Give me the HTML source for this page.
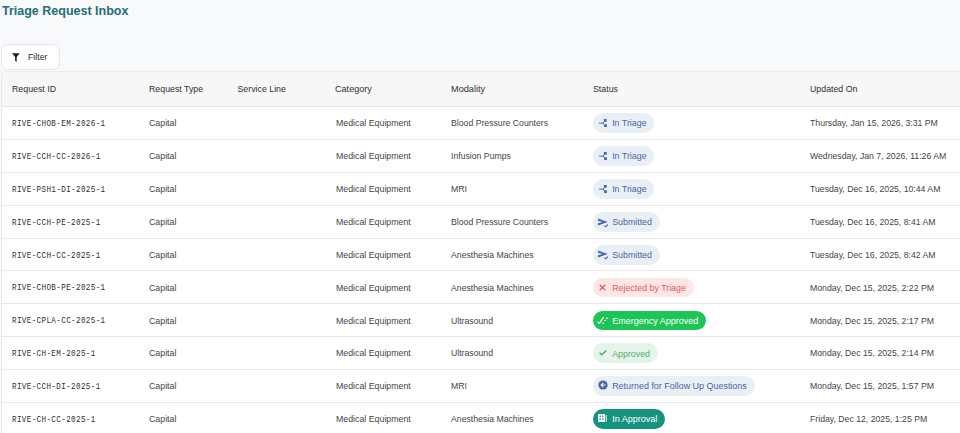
<!DOCTYPE html>
<html><head><meta charset="utf-8"><style>
*{box-sizing:border-box;margin:0;padding:0}
html,body{width:960px;height:433px;overflow:hidden;background:#f8f9fb;font-family:"Liberation Sans",sans-serif;color:#333}
.title{position:absolute;left:2px;top:3px;font-weight:bold;font-size:12.5px;line-height:16px;color:#236f77;white-space:nowrap}
.filter{position:absolute;left:1px;top:44px;width:58.5px;height:26px;background:#fff;border:1px solid #e3e6ec;border-radius:6.5px}
.filter svg{position:absolute;left:9.8px;top:7.5px}
.filter span{position:absolute;left:26px;top:5.2px;font-size:8.8px;line-height:14px;color:#333}
.table{position:absolute;left:1px;top:71px;width:1000px;height:400px;background:#fff;border-left:1px solid #e6e8ec;border-top:1px solid #eaecf0;border-top-left-radius:5px;overflow:hidden}
.hdr{position:absolute;left:0;top:0;width:100%;height:35px;background:#f7f7f7;border-bottom:1px solid #e3e5e8}
.row{position:absolute;left:0;width:100%;height:32.875px;border-bottom:1px solid #e6e8ec;background:#fff}
.c{position:absolute;top:0;height:33px;line-height:33px;font-size:8.8px;white-space:nowrap;color:#444}
.hdr .c{top:0.5px;color:#303030}
.row .c{top:0.3px}
.row .mono{font-family:"Liberation Mono",monospace;font-size:9.5px;letter-spacing:0.45px;color:#2e2e2e;transform:scaleX(0.8);transform-origin:0 50%;top:0px}
.pill{position:absolute;left:591.25px;top:6.25px;height:19.75px;border-radius:10px;padding:0 7.8px 0 18.9px;font-size:8.85px;line-height:19.75px;white-space:nowrap}
.pill svg{position:absolute}
.row .date{font-size:8.7px}
.pill span{position:relative;top:1.2px}
.triage,.submitted,.returned{background:#eaeef5;color:#4767a4}
.returned{font-size:8.95px}
.rejected{background:#fde6e6;color:#e05858}
.emergency{background:#1ec456;color:#fff;font-size:9px}
.approved{background:#e5f4ea;color:#56ad70}
.inapproval{background:#15937f;color:#fff;font-size:9px}
</style></head><body>
<div class="title">Triage Request Inbox</div>
<div class="filter"><svg width="8" height="9" viewBox="0 0 8 9"><path d="M0.1 0.3H7.7L4.7 4.1V8.9L3.1 7.7V4.1Z" fill="#1e1e1e"/></svg><span>Filter</span></div>
<div class="table">
<div class="hdr">
<div class="c" style="left:10px;">Request ID</div>
<div class="c" style="left:147px;">Request Type</div>
<div class="c" style="left:235.5px;">Service Line</div>
<div class="c" style="left:333px;font-size:9.1px">Category</div>
<div class="c" style="left:449px;font-size:9.2px">Modality</div>
<div class="c" style="left:591px;">Status</div>
<div class="c" style="left:808px;">Updated On</div>
</div>
<div class="row" style="top:35.0px"><div class="c mono" style="left:10px">RIVE-CHOB-EM-2026-1</div><div class="c" style="left:147px">Capital</div><div class="c" style="left:334px">Medical Equipment</div><div class="c" style="left:449px;font-size:8.7px">Blood Pressure Counters</div><div class="pill triage"><svg style="left:5.6px;top:5.6px" width="9" height="9" viewBox="0 0 9 9"><path d="M0 4.15H4.1L5.6 2.2M4.1 4.15L5.7 6" stroke="currentColor" stroke-width="1.0" fill="none"/><rect x="4.9" y="0" width="2.8" height="2.8" rx="0.6" fill="currentColor"/><rect x="5.1" y="5.2" width="2.8" height="2.8" rx="0.6" fill="currentColor"/></svg><span>In Triage</span></div><div class="c date" style="left:808px">Thursday, Jan 15, 2026, 3:31 PM</div></div>
<div class="row" style="top:67.875px"><div class="c mono" style="left:10px">RIVE-CCH-CC-2026-1</div><div class="c" style="left:147px">Capital</div><div class="c" style="left:334px">Medical Equipment</div><div class="c" style="left:449px;font-size:8.7px">Infusion Pumps</div><div class="pill triage"><svg style="left:5.6px;top:5.6px" width="9" height="9" viewBox="0 0 9 9"><path d="M0 4.15H4.1L5.6 2.2M4.1 4.15L5.7 6" stroke="currentColor" stroke-width="1.0" fill="none"/><rect x="4.9" y="0" width="2.8" height="2.8" rx="0.6" fill="currentColor"/><rect x="5.1" y="5.2" width="2.8" height="2.8" rx="0.6" fill="currentColor"/></svg><span>In Triage</span></div><div class="c date" style="left:808px">Wednesday, Jan 7, 2026, 11:26 AM</div></div>
<div class="row" style="top:100.75px"><div class="c mono" style="left:10px">RIVE-PSH1-DI-2025-1</div><div class="c" style="left:147px">Capital</div><div class="c" style="left:334px">Medical Equipment</div><div class="c" style="left:449px;font-size:8.7px">MRI</div><div class="pill triage"><svg style="left:5.6px;top:5.6px" width="9" height="9" viewBox="0 0 9 9"><path d="M0 4.15H4.1L5.6 2.2M4.1 4.15L5.7 6" stroke="currentColor" stroke-width="1.0" fill="none"/><rect x="4.9" y="0" width="2.8" height="2.8" rx="0.6" fill="currentColor"/><rect x="5.1" y="5.2" width="2.8" height="2.8" rx="0.6" fill="currentColor"/></svg><span>In Triage</span></div><div class="c date" style="left:808px">Tuesday, Dec 16, 2025, 10:44 AM</div></div>
<div class="row" style="top:133.625px"><div class="c mono" style="left:10px">RIVE-CCH-PE-2025-1</div><div class="c" style="left:147px">Capital</div><div class="c" style="left:334px">Medical Equipment</div><div class="c" style="left:449px;font-size:8.7px">Blood Pressure Counters</div><div class="pill submitted"><svg style="left:4.6px;top:5.7px" width="11" height="10" viewBox="0 0 11 10"><path d="M0 0.6L9.6 4L0 7.4V5.3L4.6 4L0 2.7Z" fill="currentColor"/><path d="M6.5 7.9L7.4 8.7L9.9 6.8" stroke="currentColor" stroke-width="1.1" fill="none"/></svg><span>Submitted</span></div><div class="c date" style="left:808px">Tuesday, Dec 16, 2025, 8:41 AM</div></div>
<div class="row" style="top:166.5px"><div class="c mono" style="left:10px">RIVE-CCH-CC-2025-1</div><div class="c" style="left:147px">Capital</div><div class="c" style="left:334px">Medical Equipment</div><div class="c" style="left:449px;font-size:8.7px">Anesthesia Machines</div><div class="pill submitted"><svg style="left:4.6px;top:5.7px" width="11" height="10" viewBox="0 0 11 10"><path d="M0 0.6L9.6 4L0 7.4V5.3L4.6 4L0 2.7Z" fill="currentColor"/><path d="M6.5 7.9L7.4 8.7L9.9 6.8" stroke="currentColor" stroke-width="1.1" fill="none"/></svg><span>Submitted</span></div><div class="c date" style="left:808px">Tuesday, Dec 16, 2025, 8:42 AM</div></div>
<div class="row" style="top:199.375px"><div class="c mono" style="left:10px">RIVE-CHOB-PE-2025-1</div><div class="c" style="left:147px">Capital</div><div class="c" style="left:334px">Medical Equipment</div><div class="c" style="left:449px;font-size:8.7px">Anesthesia Machines</div><div class="pill rejected"><svg style="left:5.95px;top:6.2px" width="7" height="7" viewBox="0 0 7 7"><path d="M0.6 0.6L6.4 6.4M6.4 0.6L0.6 6.4" stroke="#e04a4a" stroke-width="1.2" fill="none"/></svg><span>Rejected by Triage</span></div><div class="c date" style="left:808px">Monday, Dec 15, 2025, 2:22 PM</div></div>
<div class="row" style="top:232.25px"><div class="c mono" style="left:10px">RIVE-CPLA-CC-2025-1</div><div class="c" style="left:147px">Capital</div><div class="c" style="left:334px">Medical Equipment</div><div class="c" style="left:449px;font-size:8.7px">Ultrasound</div><div class="pill emergency"><svg style="left:4px;top:5px" width="12" height="9" viewBox="0 0 12 9"><path d="M0.5 5.7L2.3 7.4L6.7 1" stroke="currentColor" stroke-width="1.15" fill="none"/><path d="M8.9 2.2H10.8M7 4.5H8.9M5.2 7.3H7.1" stroke="currentColor" stroke-width="1.1" fill="none"/></svg><span>Emergency Approved</span></div><div class="c date" style="left:808px">Monday, Dec 15, 2025, 2:17 PM</div></div>
<div class="row" style="top:265.125px"><div class="c mono" style="left:10px">RIVE-CH-EM-2025-1</div><div class="c" style="left:147px">Capital</div><div class="c" style="left:334px">Medical Equipment</div><div class="c" style="left:449px;font-size:8.7px">Ultrasound</div><div class="pill approved"><svg style="left:5.5px;top:6.6px" width="8" height="6" viewBox="0 0 8 6"><path d="M0.6 2.8L2.7 4.9L7.3 0.6" stroke="#45a267" stroke-width="1.35" fill="none"/></svg><span>Approved</span></div><div class="c date" style="left:808px">Monday, Dec 15, 2025, 2:14 PM</div></div>
<div class="row" style="top:298.0px"><div class="c mono" style="left:10px">RIVE-CCH-DI-2025-1</div><div class="c" style="left:147px">Capital</div><div class="c" style="left:334px">Medical Equipment</div><div class="c" style="left:449px;font-size:8.7px">MRI</div><div class="pill returned"><svg style="left:4.35px;top:4.0px" width="10" height="10" viewBox="0 0 10 10"><circle cx="5" cy="5" r="4.6" fill="currentColor"/><path d="M5.3 2.9L3.2 5L5.3 7.1M3.4 5H7.5" stroke="#eaeef5" stroke-width="1.2" fill="none"/></svg><span>Returned for Follow Up Questions</span></div><div class="c date" style="left:808px">Monday, Dec 15, 2025, 1:57 PM</div></div>
<div class="row" style="top:330.875px"><div class="c mono" style="left:10px">RIVE-CH-CC-2025-1</div><div class="c" style="left:147px">Capital</div><div class="c" style="left:334px">Medical Equipment</div><div class="c" style="left:449px;font-size:8.7px">Anesthesia Machines</div><div class="pill inapproval"><svg style="left:4.85px;top:4.85px" width="9" height="9" viewBox="0 0 9 9"><rect x="0" y="0" width="7" height="8.1" rx="0.7" fill="currentColor"/><rect x="1.4" y="1.6" width="1.6" height="1.3" fill="#15937f"/><rect x="4.0" y="1.6" width="1.6" height="1.3" fill="#15937f"/><rect x="1.4" y="4.3" width="1.6" height="1.3" fill="#15937f"/><rect x="4.0" y="4.3" width="1.6" height="1.3" fill="#15937f"/><rect x="7.7" y="1.1" width="1.1" height="6.6" fill="currentColor" opacity="0.85"/></svg><span>In Approval</span></div><div class="c date" style="left:808px">Friday, Dec 12, 2025, 1:25 PM</div></div>
</div>
</body></html>
